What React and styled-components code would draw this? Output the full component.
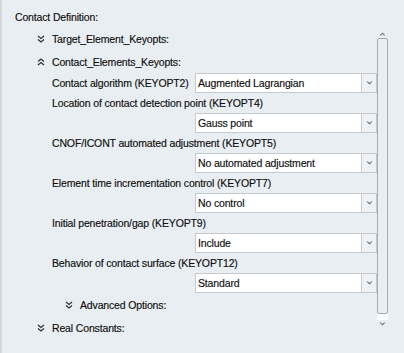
import React from 'react';
import styled, { createGlobalStyle } from 'styled-components';

const Global = createGlobalStyle`
  html, body { margin: 0; padding: 0; background: #e9eef2; }
  body { font-family: "Liberation Sans", Arial, sans-serif; }
`;

const Panel = styled.div`
  width: 404px;
  height: 353px;
  box-sizing: border-box;
  background: #e9eef2;
  border-left: 2px solid #d3d9dd;
  display: flex;
  font-size: 10.5px;
  letter-spacing: -0.15px;
  color: #0e0e0e;
  -webkit-text-stroke: 0.15px #0e0e0e;
  overflow: hidden;
`;

const Content = styled.div`
  flex: none;
  width: 375px;
  padding-top: 7px;
  display: flex;
  flex-direction: column;
`;

const Title = styled.div`
  height: 20px;
  display: flex;
  align-items: center;
  padding-left: 13px;
`;

const Header = styled.div`
  height: 23px;
  display: flex;
  align-items: center;
  gap: 7px;
  padding-left: ${(p) => p.$indent}px;
`;

const FormRow = styled.div`
  height: 20px;
  display: flex;
  align-items: center;
  padding-left: 50px;
`;

const Label = styled.div`
  width: ${(p) => (p.$inline ? '143px' : 'auto')};
  flex: none;
  white-space: nowrap;
`;

const SelectRow = styled.div`
  height: 20px;
  display: flex;
  padding-left: 193px;
`;

const Select = styled.div`
  display: flex;
  width: 182px;
  height: 20px;
  box-sizing: border-box;
  border: 1px solid #c4cace;
  background: #fff;
`;

const SelectValue = styled.div`
  flex: 1;
  padding-left: 2px;
  display: flex;
  align-items: center;
  border-right: 1px solid #c9ced2;
  white-space: nowrap;
`;

const SelectButton = styled.div`
  width: 14px;
  background: #eef2f5;
  display: flex;
  align-items: center;
  justify-content: center;
`;

const ScrollBar = styled.div`
  flex: none;
  width: 11px;
  padding-top: 30px;
  display: flex;
  flex-direction: column;
  align-items: center;
`;

const Arrow = styled.div`
  height: 7px;
  display: flex;
  align-items: center;
  justify-content: center;
`;

const Track = styled.div`
  width: 11px;
  height: 282px;
  margin-top: 1px;
  background: #fbfcfd;
  display: flex;
  flex-direction: column;
`;

const Thumb = styled.div`
  height: 276px;
  box-sizing: border-box;
  border: 1px solid #a4aaae;
  border-radius: 2px;
  background: #e9eef2;
`;

const DoubleChevron = ({ up }) => (
  <svg width="8" height="8" viewBox="0 0 8 8" fill="none" stroke="#333" strokeWidth="1.3">
    {up ? (
      <>
        <path d="M1 3.5 L4 1 L7 3.5" />
        <path d="M1 7 L4 4.5 L7 7" />
      </>
    ) : (
      <>
        <path d="M1 1 L4 3.5 L7 1" />
        <path d="M1 4.5 L4 7 L7 4.5" />
      </>
    )}
  </svg>
);

const SmallArrow = ({ up, color = '#707070' }) => (
  <svg width="7" height="4" viewBox="0 0 7 4">
    {up ? (
      <path d="M0.5 3.5 L3.5 0.5 L6.5 3.5 L5 3.5 L3.5 2 L2 3.5 Z" fill={color} />
    ) : (
      <path d="M0.5 0.5 L3.5 3.5 L6.5 0.5 L5 0.5 L3.5 2 L2 0.5 Z" fill={color} />
    )}
  </svg>
);

const Dropdown = ({ value }) => (
  <Select>
    <SelectValue>{value}</SelectValue>
    <SelectButton>
      <SmallArrow color="#6d6d6d" />
    </SelectButton>
  </Select>
);

const fields = [
  ['Location of contact detection point (KEYOPT4)', 'Gauss point'],
  ['CNOF/ICONT automated adjustment (KEYOPT5)', 'No automated adjustment'],
  ['Element time incrementation control (KEYOPT7)', 'No control'],
  ['Initial penetration/gap (KEYOPT9)', 'Include'],
  ['Behavior of contact surface (KEYOPT12)', 'Standard'],
];

export default function App() {
  return (
    <>
      <Global />
      <Panel>
        <Content>
          <Title>Contact Definition:</Title>
          <Header $indent={35}>
            <DoubleChevron />
            <span>Target_Element_Keyopts:</span>
          </Header>
          <Header $indent={35}>
            <DoubleChevron up />
            <span>Contact_Elements_Keyopts:</span>
          </Header>
          <FormRow>
            <Label $inline>Contact algorithm (KEYOPT2)</Label>
            <Dropdown value="Augmented Lagrangian" />
          </FormRow>
          {fields.map(([label, value]) => (
            <React.Fragment key={label}>
              <FormRow>
                <Label>{label}</Label>
              </FormRow>
              <SelectRow>
                <Dropdown value={value} />
              </SelectRow>
            </React.Fragment>
          ))}
          <Header $indent={63}>
            <DoubleChevron />
            <span>Advanced Options:</span>
          </Header>
          <Header $indent={35}>
            <DoubleChevron />
            <span>Real Constants:</span>
          </Header>
        </Content>
        <ScrollBar>
          <Arrow>
            <SmallArrow up />
          </Arrow>
          <Track>
            <Thumb />
          </Track>
          <Arrow>
            <SmallArrow />
          </Arrow>
        </ScrollBar>
      </Panel>
    </>
  );
}
